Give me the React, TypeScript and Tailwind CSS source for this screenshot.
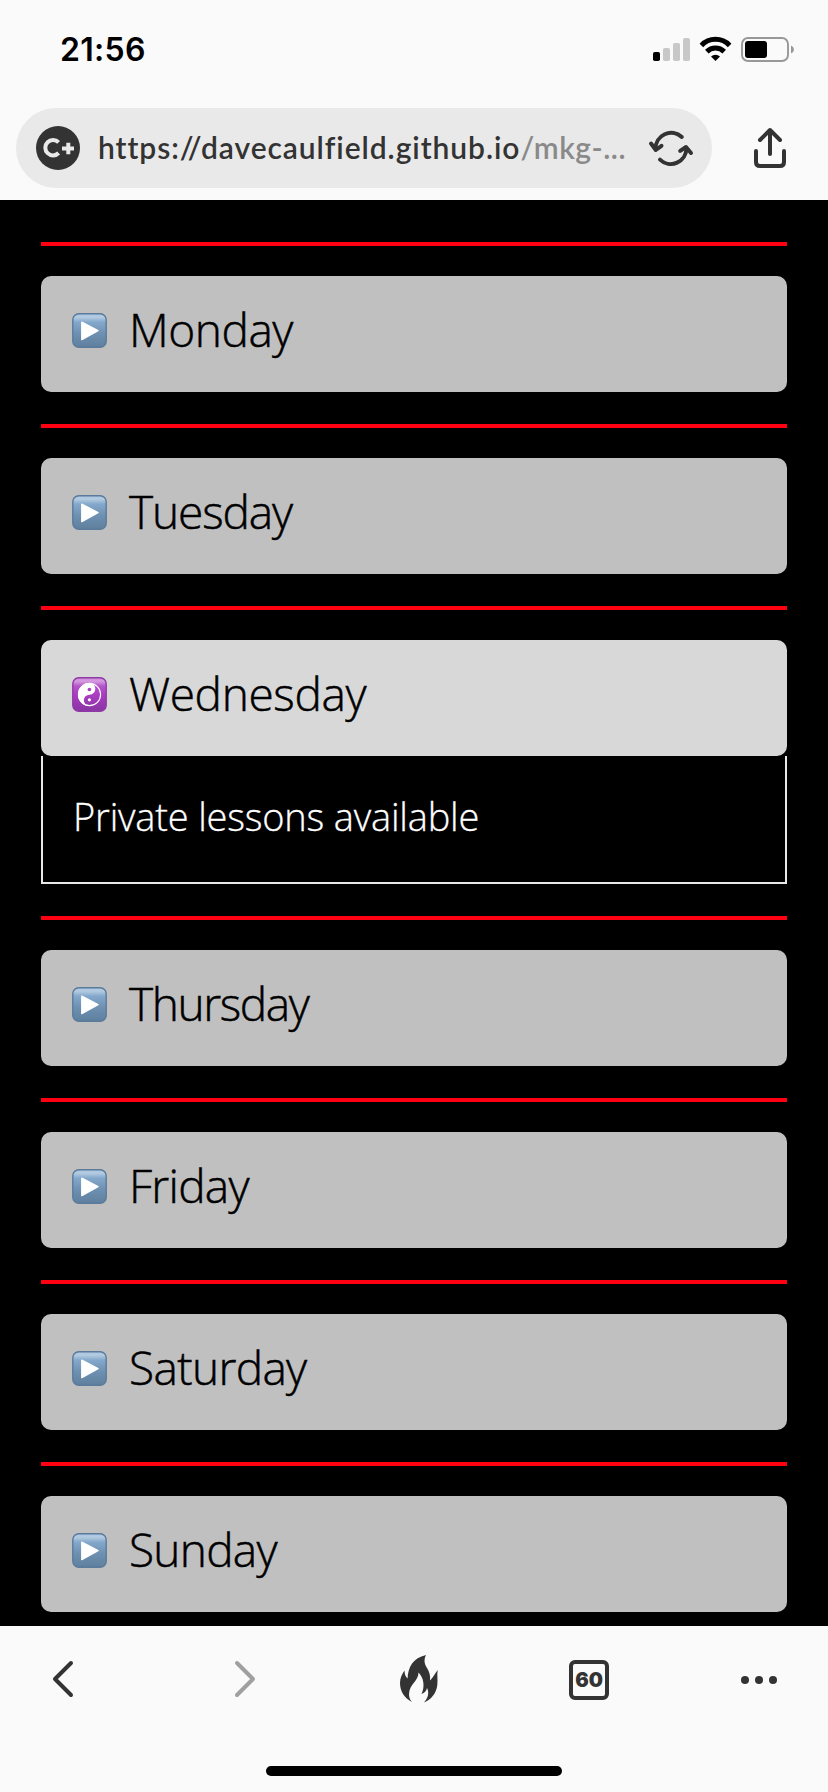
import React from "react";

const ink = "#333333";

function PlayEmoji() {
  return (
    <svg width="35" height="35" viewBox="0 0 35 35" aria-hidden="true">
      <defs>
        <linearGradient id="playFill" x1="0" y1="0" x2="0" y2="1">
          <stop offset="0" stopColor="#a9c6e2" />
          <stop offset="0.1" stopColor="#b4cbe1" />
          <stop offset="0.25" stopColor="#84a8cb" />
          <stop offset="0.6" stopColor="#6d90b1" />
          <stop offset="1" stopColor="#5f7f9d" />
        </linearGradient>
      </defs>
      <rect x="0.8" y="0.8" width="33.4" height="33.4" rx="6" fill="url(#playFill)" stroke="#5a7b9b" strokeWidth="1.4" />
      <path d="M9.8 9.2 L26 17.6 L9.8 26.6 Z" fill="#fff" stroke="#fff" strokeWidth="1.4" strokeLinejoin="round" />
    </svg>
  );
}

function YinYangEmoji() {
  return (
    <svg width="35" height="35" viewBox="0 0 35 35" aria-hidden="true">
      <defs>
        <linearGradient id="yinFill" x1="0" y1="0" x2="0" y2="1">
          <stop offset="0" stopColor="#cf86dc" />
          <stop offset="0.1" stopColor="#d49be0" />
          <stop offset="0.25" stopColor="#b455c9" />
          <stop offset="0.5" stopColor="#a93dc1" />
          <stop offset="1" stopColor="#8a34a3" />
        </linearGradient>
      </defs>
      <rect x="0.8" y="0.8" width="33.4" height="33.4" rx="6" fill="url(#yinFill)" stroke="#8e3aa5" strokeWidth="1.4" />
      <circle cx="17.5" cy="17.5" r="11.1" fill="none" stroke="#fff" strokeWidth="1.1" />
      <path d="M17.5 6 A11.5 11.5 0 0 0 17.5 29 A5.4 5.4 0 0 1 17.5 17.7 A5.8 5.8 0 0 0 17.5 6 Z" fill="#fff" />
      <circle cx="17.4" cy="12.5" r="1.8" fill="#a93dc1" />
      <circle cx="17.4" cy="22.8" r="1.6" fill="#fff" />
    </svg>
  );
}

function StatusIcons() {
  return (
    <svg width="142" height="26" viewBox="653 36 142 26" aria-hidden="true">
      <rect x="653" y="52" width="7" height="9" rx="1.8" fill="#000" />
      <rect x="663" y="48" width="7" height="13" rx="1.8" fill="#c8c8c8" />
      <rect x="673" y="43" width="7" height="18" rx="1.8" fill="#c8c8c8" />
      <rect x="683" y="38" width="7" height="23" rx="1.8" fill="#c8c8c8" />
      <g fill="none" stroke="#000" strokeWidth="5">
        <path d="M701.4 45.4 A19.5 19.5 0 0 1 729.6 45.4" />
        <path d="M706.8 51.6 A12.4 12.4 0 0 1 724.2 51.6" />
      </g>
      <path d="M711 56.600 A6.600 6.600 0 0 1 720 56.600 L715.500 61 Z" fill="#000" />
      <rect x="742" y="38" width="46" height="23" rx="6" fill="none" stroke="#989898" strokeWidth="1.9" />
      <rect x="745" y="41" width="22" height="17" rx="3" fill="#000" />
      <path d="M791 45.500 Q794 47 794 49.500 Q794 52 791 53.500 Z" fill="#989898" />
    </svg>
  );
}

function ReloadIcon() {
  return (
    <svg width="46" height="38" viewBox="647 128 46 38" fill="none" stroke={ink} strokeWidth="4" strokeLinecap="round" strokeLinejoin="round" aria-hidden="true">
      <path d="M680.8 136 A15.6 15.6 0 0 0 654.6 148" />
      <path d="M650 142.500 L654.800 149 L660.500 144.800" />
      <path d="M659 158.600 A15.600 15.600 0 0 0 685.400 147" />
      <path d="M679.200 149.800 L685 146 L690 152" />
    </svg>
  );
}

function ShareIcon() {
  return (
    <svg width="34" height="42" viewBox="753 127 34 42" fill="none" stroke={ink} strokeWidth="4" strokeLinecap="round" strokeLinejoin="round" aria-hidden="true">
      <path d="M770 154 V130.500 M760 140 L770 130 L780 140" />
      <path d="M756 151 V162 Q756 166 760 166 H780 Q784 166 784 162 V151" />
    </svg>
  );
}

function FlameIcon() {
  return (
    <svg width="38" height="48" viewBox="400 1655 38 48" fill={ink} aria-hidden="true">
      <path d="M412 1702 C404 1698 400 1691 400 1683 C400 1678 402 1674 404.500 1670.500 C404.600 1674 405.500 1677 407.600 1678.500 C408 1667 413 1658 426 1655 C423.500 1660 424.500 1664 427 1668 C429.500 1672 430.500 1676 430 1680.500 C433 1678 434.500 1674 437.700 1670 C436.800 1675 438 1679 437.300 1685 C436.500 1693 431 1700 424 1702.500 C428 1698 429.500 1693 427 1688 C426.500 1691 424.500 1693 421.500 1694 C425 1687 424 1678 418.500 1672.500 C418.500 1681 409.500 1684 409 1694 C408.900 1697 410 1700 412 1702 Z" />
    </svg>
  );
}

type Day = { name: string; tracking: string; note?: string };

const days: Day[] = [
  { name: "Monday", tracking: "tracking-[-0.45px]" },
  { name: "Tuesday", tracking: "tracking-[-1.1px]" },
  { name: "Wednesday", tracking: "tracking-[-0.35px]", note: "Private lessons available" },
  { name: "Thursday", tracking: "tracking-[-1.4px]" },
  { name: "Friday", tracking: "tracking-[-0.75px]" },
  { name: "Saturday", tracking: "tracking-[-0.65px]" },
  { name: "Sunday", tracking: "tracking-[-0.75px]" },
];

function DaySection({ day }: { day: Day }) {
  const open = Boolean(day.note);
  return (
    <section className="mb-8">
      <div className="mb-[30px] h-1 bg-[#ff0013]" />
      <button
        className={`flex h-[116px] w-full items-start rounded-[10px] pt-[37px] pl-[31px] text-left text-black ${open ? "bg-[#d8d8d8]" : "bg-[#c0c0c0]"}`}
      >
        {open ? <YinYangEmoji /> : <PlayEmoji />}
        <span className={`-mt-[13px] ml-[22px] text-[46px] leading-[58px] font-light whitespace-nowrap [-webkit-text-stroke:0.5px_#000] ${day.tracking}`}>{day.name}</span>
      </button>
      {open && (
        <div className="h-32 border-x-2 border-b-2 border-[#e8e8e8] pt-[36px] pl-[30px] text-[38px] leading-[48px] font-light tracking-[-0.19px] whitespace-nowrap text-white [-webkit-text-stroke:0.3px_#fff]">
          {day.note}
        </div>
      )}
    </section>
  );
}

export default function App() {
  return (
    <div className="flex h-[1792px] w-[828px] flex-col overflow-hidden bg-[#fafafa] font-['Inter',sans-serif]">
      <header className="h-[200px] shrink-0">
        <div className="flex h-[108px] items-start justify-between pt-[36px] pr-[33px] pl-[60px]">
          <span className="-mt-[6px] text-[32px] leading-[40px] font-semibold tracking-[0.3px] text-black">21:56</span>
          <StatusIcons />
        </div>
        <div className="flex items-center pl-4">
          <div className="flex h-20 w-[696px] items-center rounded-full bg-[#e9e9e9] pl-5">
            <div className="flex size-11 shrink-0 items-center justify-center rounded-full bg-[#333333]">
              <svg width="32" height="20" viewBox="0 0 32 20" fill="none" stroke="#e9e9e9" strokeWidth="4" aria-hidden="true">
                <path d="M16.600 4.400 A7.700 7.700 0 1 0 16.600 15" />
                <path d="M20 10.500 H32 M26.300 4.700 V16.300" />
              </svg>
            </div>
            <div className="-mt-[2px] ml-[18px] w-[550px] font-['Lato',sans-serif] text-[30px] font-semibold tracking-[0.93px] whitespace-nowrap text-[#333333]">
              https://davecaulfield.github.io<span className="tracking-[0.5px] text-[#8a8a8a]">/mkg-...</span>
            </div>
            <ReloadIcon />
          </div>
          <div className="ml-[41px]">
            <ShareIcon />
          </div>
        </div>
      </header>
      <main className="h-[1426px] shrink-0 overflow-hidden bg-black px-[41px] pt-[42px] font-['Open_Sans',sans-serif]">
        {days.map((day) => (
          <DaySection key={day.name} day={day} />
        ))}
      </main>
      <footer className="flex grow flex-col">
        <nav className="flex h-[144px] items-start pt-[28px] pl-[52px]">
          <svg className="mt-[6px]" width="22" height="38" viewBox="0 0 22 38" fill="none" stroke={ink} strokeWidth="4" strokeLinecap="round" strokeLinejoin="round" aria-hidden="true">
            <path d="M19 3 L3 19 L19 35" />
          </svg>
          <svg className="mt-[6px] ml-[160px]" width="22" height="38" viewBox="0 0 22 38" fill="none" stroke="#a0a0a0" strokeWidth="4" strokeLinecap="round" strokeLinejoin="round" aria-hidden="true">
            <path d="M3 3 L19 19 L3 35" />
          </svg>
          <div className="mt-px ml-[144px]">
            <FlameIcon />
          </div>
          <div className="mt-[6px] ml-[131px] flex size-10 items-center justify-center rounded-[6px] border-4 border-[#333333] text-[20px] leading-none font-black text-[#333333]">
            60
          </div>
          <svg className="mt-[22px] ml-[132px]" width="36" height="8" viewBox="0 0 36 8" fill={ink} aria-hidden="true">
            <circle cx="4" cy="4" r="4" />
            <circle cx="18" cy="4" r="4" />
            <circle cx="32" cy="4" r="4" />
          </svg>
        </nav>
        <div className="-mt-1 h-[10px] w-[296px] self-center rounded-full bg-black" />
      </footer>
    </div>
  );
}
